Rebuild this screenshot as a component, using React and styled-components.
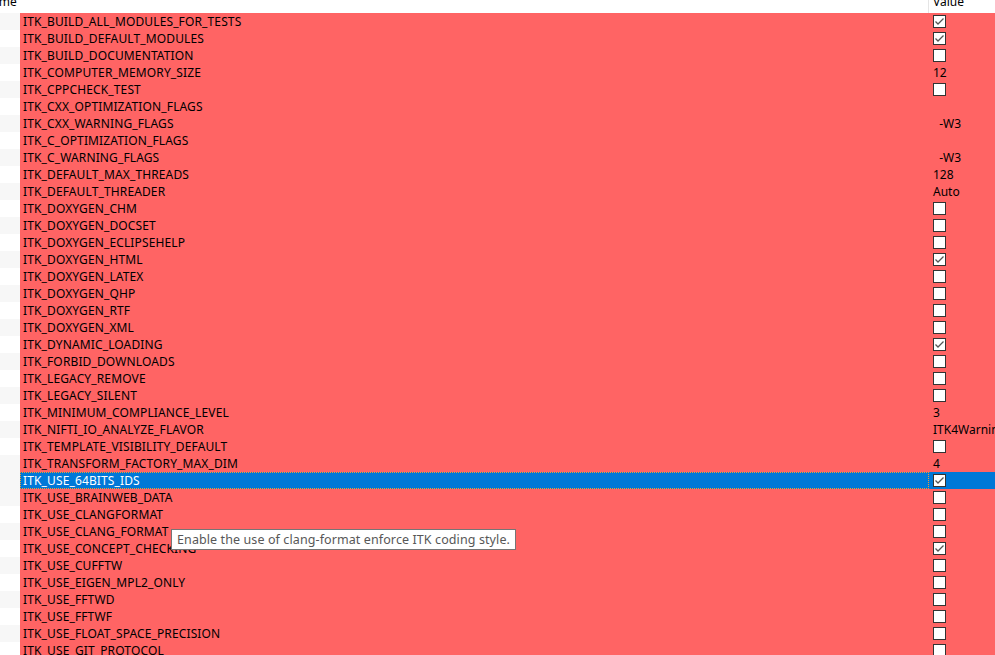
import React from "react";
import styled, { createGlobalStyle } from "styled-components";

const Global = createGlobalStyle`
  html, body { margin:0; padding:0; background:#fff; overflow:hidden; }
  body { font-family: "Noto Sans", "Noto Sans CJK SC", sans-serif; font-size:12px; color:#000; }
`;

const Wrap = styled.div`
  position: relative;
  width: 995px;
  height: 655px;
  overflow: hidden;
`;

const Header = styled.div`
  display:flex;
  height:13px;
  overflow:hidden;
  background:#fff;
`;

const HeadCell = styled.div`
  box-sizing:border-box;
  width:${p => p.w}px;
  flex:none;
  line-height:17px;
  margin-top:-7px;
  padding-left:${p => p.pad || 0}px;
  border-right:${p => p.divider ? "1px solid #e5e5e5" : "none"};
  height:20px;
  color:#000;
  white-space:nowrap;
`;

const Row = styled.div`
  display:flex;
  height:17px;
  line-height:17px;
`;

const Indent = styled.div`
  width:20px;
  flex:none;
  background:${p => p.alt ? "#f7f7f7" : "#fff"};
`;

const NameCell = styled.div`
  box-sizing:border-box;
  width:909px;
  flex:none;
  white-space:nowrap;
  letter-spacing:0.13px;
  background:${p => p.sel ? "#0078d7" : "#ff6464"};
  color:${p => p.sel ? "#fff" : "#000"};
  border:${p => p.sel ? "1px dotted #f79a32" : "none"};
  line-height:${p => p.sel ? "15px" : "17px"};
  padding-left:${p => p.sel ? "2px" : "3px"};
`;

const ValueCell = styled.div`
  flex:1;
  display:flex;
  align-items:center;
  padding-left:4px;
  white-space:pre;
  overflow:hidden;
  background:${p => p.sel ? "#0078d7" : "#ff6464"};
  color:${p => p.sel ? "#fff" : "#000"};
`;

const Box = styled.span`
  box-sizing:border-box;
  width:13px;
  height:13px;
  border:1px solid #333;
  background:#fff;
  display:flex;
  align-items:center;
  justify-content:center;
`;

const Tip = styled.div`
  position:absolute;
  left:171px;
  top:529px;
  height:21px;
  box-sizing:border-box;
  padding:0 5px;
  border:1px solid #767676;
  background:#fff;
  color:#575757;
  font-size:12.5px;
  letter-spacing:0.1px;
  line-height:19px;
  white-space:nowrap;
`;

const Check = ({ on }) => (
  <Box>
    {on && (
      <svg width="11" height="11" viewBox="0 0 11 11">
        <path d="M1.5 5.5 L4 8 L9.5 2.5" fill="none" stroke="#555" strokeWidth="1.3" />
      </svg>
    )}
  </Box>
);

// [name, value] — true/false means a checkbox
const rows = [
  ["ITK_BUILD_ALL_MODULES_FOR_TESTS", true],
  ["ITK_BUILD_DEFAULT_MODULES", true],
  ["ITK_BUILD_DOCUMENTATION", false],
  ["ITK_COMPUTER_MEMORY_SIZE", "12"],
  ["ITK_CPPCHECK_TEST", false],
  ["ITK_CXX_OPTIMIZATION_FLAGS", ""],
  ["ITK_CXX_WARNING_FLAGS", "  -W3"],
  ["ITK_C_OPTIMIZATION_FLAGS", ""],
  ["ITK_C_WARNING_FLAGS", "  -W3"],
  ["ITK_DEFAULT_MAX_THREADS", "128"],
  ["ITK_DEFAULT_THREADER", "Auto"],
  ["ITK_DOXYGEN_CHM", false],
  ["ITK_DOXYGEN_DOCSET", false],
  ["ITK_DOXYGEN_ECLIPSEHELP", false],
  ["ITK_DOXYGEN_HTML", true],
  ["ITK_DOXYGEN_LATEX", false],
  ["ITK_DOXYGEN_QHP", false],
  ["ITK_DOXYGEN_RTF", false],
  ["ITK_DOXYGEN_XML", false],
  ["ITK_DYNAMIC_LOADING", true],
  ["ITK_FORBID_DOWNLOADS", false],
  ["ITK_LEGACY_REMOVE", false],
  ["ITK_LEGACY_SILENT", false],
  ["ITK_MINIMUM_COMPLIANCE_LEVEL", "3"],
  ["ITK_NIFTI_IO_ANALYZE_FLAVOR", "ITK4Warning"],
  ["ITK_TEMPLATE_VISIBILITY_DEFAULT", false],
  ["ITK_TRANSFORM_FACTORY_MAX_DIM", "4"],
  ["ITK_USE_64BITS_IDS", true],
  ["ITK_USE_BRAINWEB_DATA", false],
  ["ITK_USE_CLANGFORMAT", false],
  ["ITK_USE_CLANG_FORMAT", false],
  ["ITK_USE_CONCEPT_CHECKING", true],
  ["ITK_USE_CUFFTW", false],
  ["ITK_USE_EIGEN_MPL2_ONLY", false],
  ["ITK_USE_FFTWD", false],
  ["ITK_USE_FFTWF", false],
  ["ITK_USE_FLOAT_SPACE_PRECISION", false],
  ["ITK_USE_GIT_PROTOCOL", false],
];

const SELECTED = 27;

export default function App() {
  return (
    <Wrap>
      <Global />
      <Header>
        <HeadCell w={946} divider style={{ marginLeft: -17 }}>Name</HeadCell>
        <HeadCell w={80} pad={4}>Value</HeadCell>
      </Header>
      {rows.map(([name, val], i) => {
        const sel = i === SELECTED;
        return (
          <Row key={name}>
            <Indent alt={i % 2 === 0 || sel} />
            <NameCell sel={sel}>{name}</NameCell>
            <ValueCell sel={sel}>
              {typeof val === "boolean" ? <Check on={val} /> : val}
            </ValueCell>
          </Row>
        );
      })}
      <Tip>Enable the use of clang-format enforce ITK coding style.</Tip>
    </Wrap>
  );
}
